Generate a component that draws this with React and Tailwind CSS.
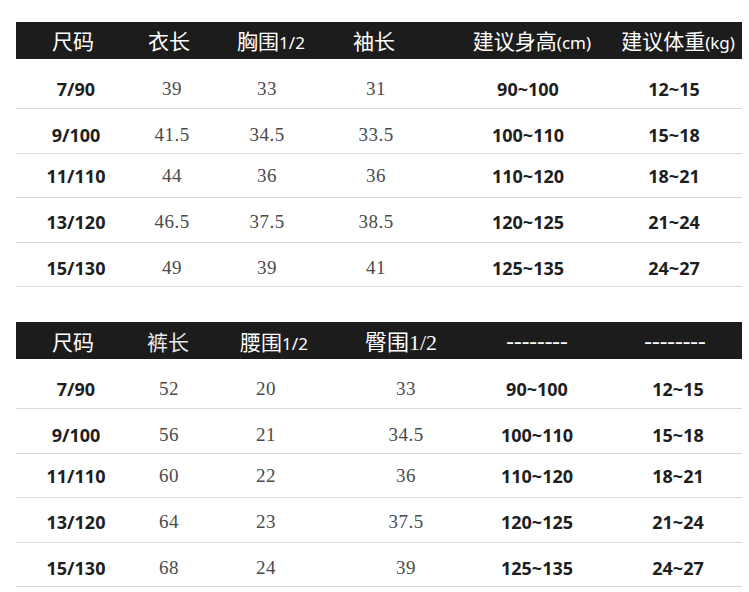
const sans = "font-['Noto_Sans','Noto_Sans_CJK_SC',sans-serif]";
const serif = "font-['Liberation_Serif','Noto_Sans_CJK_SC',serif]";

const rowStyles = [
  "h-[50px] pt-3",
  "h-[45px] pt-2",
  "h-[44px] pt-[2px]",
  "h-[45px] pt-[5px]",
  "h-[44px] pt-[7px]",
];

const sizes = [
  ["7/90", "90~100", "12~15"],
  ["9/100", "100~110", "15~18"],
  ["11/110", "110~120", "18~21"],
  ["13/120", "120~125", "21~24"],
  ["15/130", "125~135", "24~27"],
];

const topValues = [
  ["39", "33", "31"],
  ["41.5", "34.5", "33.5"],
  ["44", "36", "36"],
  ["46.5", "37.5", "38.5"],
  ["49", "39", "41"],
];

const bottomValues = [
  ["52", "20", "33"],
  ["56", "21", "34.5"],
  ["60", "22", "36"],
  ["64", "23", "37.5"],
  ["68", "24", "39"],
];

const HeadCell = ({ children, className = "" }) => (
  <div className={"flex items-baseline justify-center whitespace-nowrap " + className}>
    {children}
  </div>
);

const Small = ({ children }) => (
  <span className={sans + " text-[17px]"}>{children}</span>
);

const Bold = ({ children, className = "" }) => (
  <div
    className={
      sans +
      " flex items-center justify-center whitespace-nowrap text-[18px] font-bold text-[#1e1e1e] " +
      className
    }
  >
    {children}
  </div>
);

const Plain = ({ children, className = "" }) => (
  <div
    className={
      serif +
      " flex items-center justify-center whitespace-nowrap text-[19px] tracking-[0.5px] text-[#4a4a4a] " +
      className
    }
  >
    {children}
  </div>
);

const TopTable = () => (
  <div className="ml-4 mt-[22px] w-[726px]">
    <div
      className={
        sans +
        " grid h-[37px] grid-cols-[114px_78px_126px_80px_236px_56px] items-center bg-[#1c1c1c] pt-[3px] text-[21px] text-white"
      }
    >
      <HeadCell>尺码</HeadCell>
      <HeadCell>衣长</HeadCell>
      <HeadCell>
        胸围<Small>1/2</Small>
      </HeadCell>
      <HeadCell>袖长</HeadCell>
      <HeadCell>
        建议身高<Small>(cm)</Small>
      </HeadCell>
      <HeadCell>
        建议体重<Small>(kg)</Small>
      </HeadCell>
    </div>
    {sizes.map((s, i) => (
      <div
        key={s[0]}
        className={
          "grid grid-cols-[120px_72px_118px_100px_204px_88px] border-b border-[#d9d9d9] " +
          rowStyles[i]
        }
      >
        <Bold>{s[0]}</Bold>
        <Plain>{topValues[i][0]}</Plain>
        <Plain>{topValues[i][1]}</Plain>
        <Plain>{topValues[i][2]}</Plain>
        <Bold>{s[1]}</Bold>
        <Bold>{s[2]}</Bold>
      </div>
    ))}
  </div>
);

const BottomTable = () => (
  <div className="ml-4 mt-[35px] w-[726px]">
    <div
      className={
        sans +
        " grid h-[37px] grid-cols-[114px_76px_136px_118px_154px_122px] items-center bg-[#1c1c1c] pt-[3px] text-[21px] text-white"
      }
    >
      <HeadCell>尺码</HeadCell>
      <HeadCell className="text-[#e8e8e8]">裤长</HeadCell>
      <HeadCell>
        腰围<Small>1/2</Small>
      </HeadCell>
      <HeadCell className={serif + " text-[22px]"}>臀围1/2</HeadCell>
      <HeadCell className={serif + " text-[23px]"}>--------</HeadCell>
      <HeadCell className={serif + " text-[23px]"}>--------</HeadCell>
    </div>
    {sizes.map((s, i) => (
      <div
        key={s[0]}
        className={
          "grid grid-cols-[120px_66px_128px_152px_110px_150px] border-b border-[#d9d9d9] " +
          rowStyles[i]
        }
      >
        <Bold>{s[0]}</Bold>
        <Plain>{bottomValues[i][0]}</Plain>
        <Plain>{bottomValues[i][1]}</Plain>
        <Plain>{bottomValues[i][2]}</Plain>
        <Bold>{s[1]}</Bold>
        <Bold className="pl-[22px]">{s[2]}</Bold>
      </div>
    ))}
  </div>
);

export default function App() {
  return (
    <div className="h-[592px] w-[749px] overflow-hidden bg-white">
      <TopTable />
      <BottomTable />
    </div>
  );
}
